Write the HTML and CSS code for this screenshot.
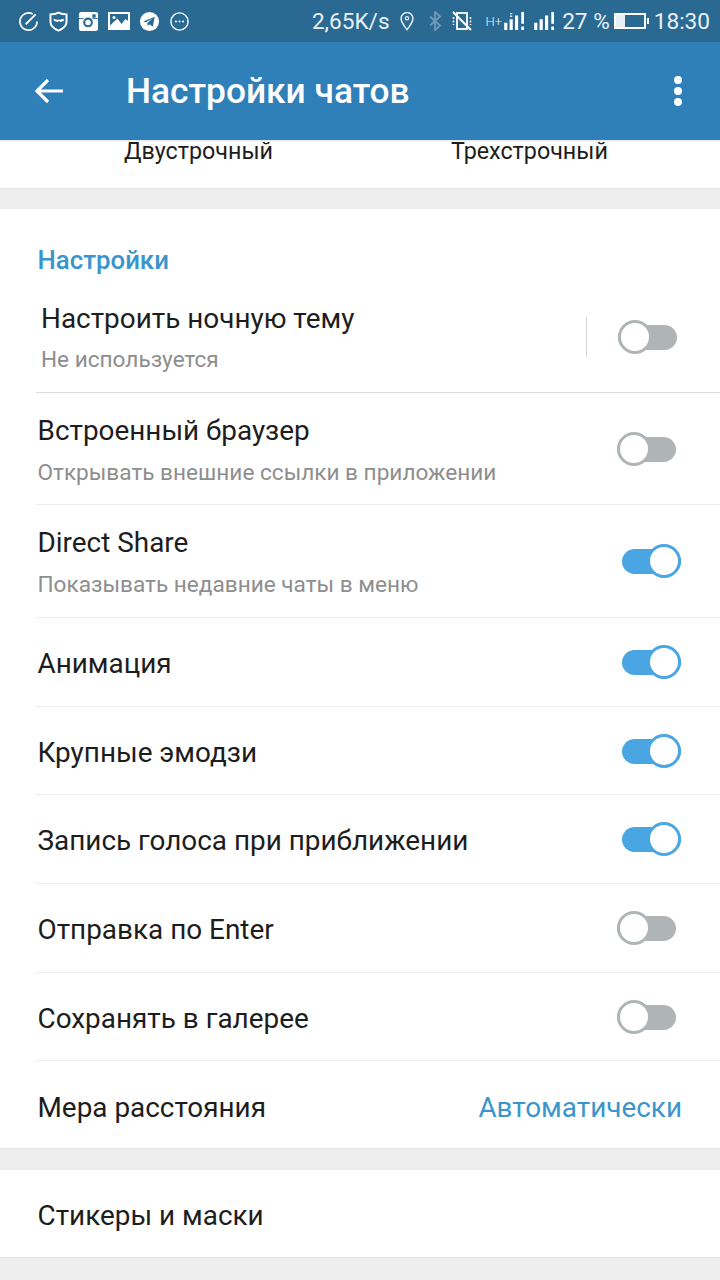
FILE: index.html
```html
<!DOCTYPE html>
<html lang="ru">
<head>
    <meta charset="UTF-8">
    <meta name="viewport" content="width=device-width, initial-scale=1.0">
    <title>Настройки чатов</title>
    <link rel="stylesheet" href="styles.css">
</head>
<body>
    <div class="status-bar">
        <div class="status-left">
            <svg class="st-icon" viewBox="0 0 22 22"><path d="M15.500 3.200A9 9 0 1 0 20 11" fill="none" stroke="#fff" stroke-width="1.700"/><path d="M8 14L18.500 3.500" stroke="#fff" stroke-width="2"/></svg>
            <svg class="st-icon" viewBox="0 0 22 22"><path d="M11 1.600c3 1.500 5.600 1.900 8.400 1.900v8c0 4-3.600 7-8.400 9-4.800-2-8.400-5-8.400-9v-8c2.800 0 5.400-.4 8.400-1.900z" fill="none" stroke="#fff" stroke-width="2"/><path d="M5.500 8l4 1.200h3l4-1.200v2.600l-3.500.8-1.500-.8-1.500.8-3.500-.8z" fill="#fff"/></svg>
            <svg class="st-icon" viewBox="0 0 22 22"><rect x="1" y="1" width="20" height="20" rx="2.500" fill="#fff"/><circle cx="10.500" cy="12" r="4" fill="none" stroke="#2a6a92" stroke-width="2.200"/><rect x="15" y="3.500" width="3.500" height="3.500" fill="#2a6a92"/><path d="M1 8h5M15 8h6" stroke="#2a6a92" stroke-width="1"/></svg>
            <svg class="st-img" viewBox="0 0 22 18"><rect width="22" height="18" fill="#fff"/><path d="M2 2h18v7l-2.500-2-4 5-4-5.500L2 13.500z" fill="#2a6a92"/><circle cx="6" cy="5.500" r="1.500" fill="#fff"/></svg>
            <svg class="st-icon" viewBox="0 0 22 22"><circle cx="11" cy="11" r="10" fill="#fff"/><path d="M4.500 11L16.500 6l-2 10.500-3.500-2.500-1.800 1.800-.5-3.300 5.800-4.800-7.200 4.200z" fill="#2a6a92"/></svg>
            <svg class="st-icon" viewBox="0 0 22 22"><circle cx="11" cy="11" r="9" fill="none" stroke="#fff" stroke-width="1.500"/><circle cx="7.300" cy="11" r="1.100" fill="#fff"/><circle cx="11" cy="11" r="1.100" fill="#fff"/><circle cx="14.700" cy="11" r="1.100" fill="#fff"/></svg>
        </div>
        <div class="status-right">
            <span class="speed">2,65K/s</span>
            <svg class="st-pin" viewBox="0 0 16 22"><path d="M8 20.500C5 16.500 1.500 12.500 1.500 8.200a6.500 6.500 0 0 1 13 0c0 4.300-3.500 8.300-6.500 12.300z" fill="none" stroke="#dfeaf1" stroke-width="1.700"/><circle cx="8" cy="8" r="1.800" fill="none" stroke="#dfeaf1" stroke-width="1.400"/></svg>
            <svg class="st-bt" viewBox="0 0 16 22"><path d="M2 6l11 10-5.500 5V1L13 6 2 16" fill="none" stroke="#6f9bb8" stroke-width="2"/></svg>
            <svg class="st-vib" viewBox="0 0 22 22"><rect x="6" y="3" width="10" height="16" fill="none" stroke="#fff" stroke-width="1.800"/><path d="M2 2l18 18" stroke="#fff" stroke-width="2"/><path d="M2.500 7v8M19.500 7v8" stroke="#fff" stroke-width="1.500" stroke-dasharray="2 1.500"/></svg>
            <span class="net">H+</span>
            <svg class="st-sig" viewBox="0 0 24 20"><path d="M0 12h3.500v8H0zM6 8h3.500v12H6zM12 4h3.500v16H12z" fill="#fff"/><path d="M19 0h3v13h-3zM19 16h3v4h-3z" fill="#fff"/><path d="M6.500 1h2.500v1.500H6.500zM6.500 4h2.500v1.500H6.500z" fill="#dfeaf1"/></svg>
            <svg class="st-sig second" viewBox="0 0 24 20"><path d="M0 12h3.500v8H0zM6 8h3.500v12H6zM12 4h3.500v16H12z" fill="#fff"/><path d="M19 0h3v13h-3zM19 16h3v4h-3z" fill="#fff"/></svg>
            <span class="percent">27 %</span>
            <div class="battery"><div class="battery-fill"></div></div>
            <span class="clock">18:30</span>
        </div>
    </div>

    <div class="app-bar">
        <svg class="back" viewBox="0 0 30 26"><path d="M29 13H3M14 2L3 13l11 11" fill="none" stroke="#fff" stroke-width="3.200"/></svg>
        <h1>Настройки чатов</h1>
        <div class="more"><span></span><span></span><span></span></div>
    </div>

    <div class="preview-labels">
        <span class="label-two">Двустрочный</span>
        <span class="label-three">Трехстрочный</span>
    </div>

    <div class="card settings">
        <div class="section-title">Настройки</div>

        <div class="row tall night">
            <div class="row-text">
                <div class="title">Настроить ночную тему</div>
                <div class="sub">Не используется</div>
            </div>
            <div class="divider"></div>
            <div class="switch"></div>
        </div>
        <div class="row tall">
            <div class="row-text">
                <div class="title">Встроенный браузер</div>
                <div class="sub">Открывать внешние ссылки в приложении</div>
            </div>
            <div class="switch"></div>
        </div>
        <div class="row tall share">
            <div class="row-text">
                <div class="title">Direct Share</div>
                <div class="sub">Показывать недавние чаты в меню</div>
            </div>
            <div class="switch on"></div>
        </div>
        <div class="row">
            <div class="title">Анимация</div>
            <div class="switch on"></div>
        </div>
        <div class="row">
            <div class="title">Крупные эмодзи</div>
            <div class="switch on"></div>
        </div>
        <div class="row">
            <div class="title">Запись голоса при приближении</div>
            <div class="switch on"></div>
        </div>
        <div class="row">
            <div class="title">Отправка по Enter</div>
            <div class="switch"></div>
        </div>
        <div class="row">
            <div class="title">Сохранять в галерее</div>
            <div class="switch"></div>
        </div>
        <div class="row last">
            <div class="title">Мера расстояния</div>
            <div class="value">Автоматически</div>
        </div>
    </div>

    <div class="card stickers">
        <div class="row last">
            <div class="title">Стикеры и маски</div>
        </div>
    </div>
</body>
</html>
```

FILE: styles.css
```css
html, body {
    margin: 0;
    padding: 0;
}
body {
    width: 720px;
    height: 1280px;
    overflow: hidden;
    background-color: #eeeeee;
    font-family: 'Roboto', sans-serif;
    color: #1d1d1d;
}
.status-bar {
    height: 42px;
    background-color: #2a6a92;
    display: flex;
    align-items: center;
    justify-content: space-between;
    padding: 0 10px 0 18px;
    color: #e8f0f5;
}
.status-left {
    display: flex;
    align-items: center;
    gap: 9px;
}
.status-right {
    display: flex;
    align-items: center;
}
.st-icon {
    width: 21px;
    height: 21px;
}
.st-img {
    width: 22px;
    height: 18px;
}
.speed {
    font-size: 22.600px;
}
.st-pin {
    width: 16px;
    height: 20px;
    margin-left: 9px;
}
.st-bt {
    width: 15px;
    height: 20px;
    margin-left: 13px;
}
.st-vib {
    width: 22px;
    height: 22px;
    margin-left: 8px;
}
.net {
    font-size: 13px;
    font-weight: 300;
    margin-left: 13px;
}
.st-sig {
    width: 22px;
    height: 18px;
    margin-left: 2px;
}
.st-sig.second {
    margin-left: 8px;
}
.percent {
    font-size: 22.600px;
    margin-left: 6px;
}
.battery {
    width: 28px;
    height: 12px;
    border: 2px solid #fff;
    margin-left: 4px;
    position: relative;
}
.battery::after {
    content: "";
    position: absolute;
    right: -5px;
    top: 3px;
    width: 2px;
    height: 6px;
    background-color: #fff;
}
.battery-fill {
    width: 9px;
    height: 100%;
    background-color: #e8f0f5;
}
.clock {
    font-size: 22.600px;
    margin-left: 8px;
}
.app-bar {
    height: 98px;
    background-color: #2f7fb8;
    display: flex;
    align-items: center;
    padding: 0 38px 0 34px;
    color: #fff;
    position: relative;
}
.back {
    width: 30px;
    height: 26px;
}
.app-bar h1 {
    flex: 1;
    margin: 0 0 0 62px;
    font-size: 35.300px;
    font-weight: 500;
}
.more {
    display: flex;
    flex-direction: column;
    gap: 3px;
}
.more span {
    width: 8px;
    height: 8px;
    border-radius: 50%;
    background-color: #fff;
}
.preview-labels {
    height: 48px;
    background-color: #fff;
    border-bottom: 1px solid #e4e4e4;
    box-shadow: inset 0 2px 2px -1px rgba(0, 0, 0, 0.12);
    font-size: 23.300px;
    display: flex;
    line-height: 23px;
}
.label-two {
    margin-left: 124px;
}
.label-three {
    margin-left: 178px;
}
.card {
    background-color: #fff;
    border-bottom: 1px solid #e4e4e4;
}
.settings {
    margin-top: 20px;
    height: 939px;
}
.stickers {
    margin-top: 21px;
    height: 87px;
}
.section-title {
    height: 72px;
    box-sizing: border-box;
    padding: 36px 0 0 37.500px;
    font-size: 25.800px;
    line-height: 30px;
    font-weight: 500;
    color: #3a95cc;
}
.row {
    height: 88.700px;
    box-sizing: border-box;
    margin-left: 36px;
    padding: 0 38px 0 1.500px;
    display: flex;
    align-items: center;
    justify-content: space-between;
    border-bottom: 1px solid #ececec;
}
.row.tall {
    height: 112px;
}
.row.share {
    height: 113px;
}
.row.night {
    padding-left: 5px;
    padding-right: 42px;
    border-bottom-color: #dcdcdc;
}
.row.last {
    border-bottom: none;
}
.row-text {
    flex: 1;
}
.title {
    font-size: 27.900px;
    line-height: 32px;
    padding-top: 4px;
}
.sub {
    font-size: 22.600px;
    line-height: 28px;
    margin-top: 12px;
    color: #8e8e8e;
}
.night .sub {
    margin-top: 11px;
}
.value {
    font-size: 27.900px;
    line-height: 32px;
    padding-top: 4px;
    color: #3a95cc;
}
.divider {
    width: 1px;
    height: 40px;
    background-color: #d4d4d4;
    margin-right: 31px;
}
/* track with the round knob on top of it */
.switch {
    width: 60px;
    height: 34px;
    margin-right: 5px;
    position: relative;
}
.night .switch {
    margin-right: 0;
}
.switch.on {
    margin-right: 0;
}
.switch::before {
    content: "";
    position: absolute;
    left: 0;
    top: 5px;
    width: 59px;
    height: 25px;
    border-radius: 13px;
    background-color: #afb4b6;
}
.switch::after {
    content: "";
    position: absolute;
    left: 0;
    top: 0;
    width: 28px;
    height: 28px;
    border: 3.500px solid #afb4b6;
    border-radius: 50%;
    background-color: #fff;
}
.switch.on::before {
    background-color: #4aa6e3;
}
.switch.on::after {
    left: 25px;
    border-color: #4aa6e3;
}
```
